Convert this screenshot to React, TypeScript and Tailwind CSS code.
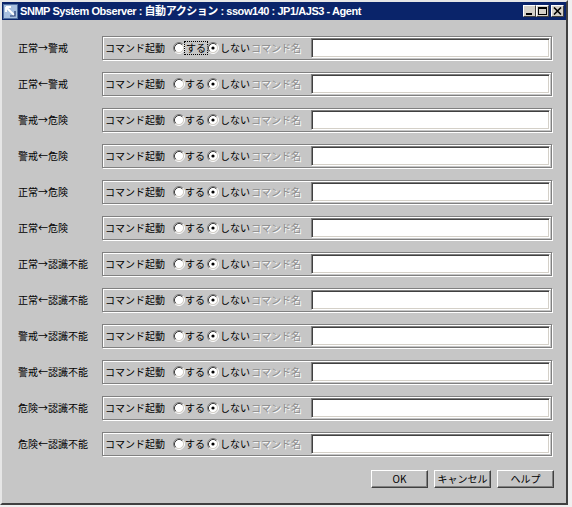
import React from 'react';

const rows = [
  '正常→警戒',
  '正常←警戒',
  '警戒→危険',
  '警戒←危険',
  '正常→危険',
  '正常←危険',
  '正常→認識不能',
  '正常←認識不能',
  '警戒→認識不能',
  '警戒←認識不能',
  '危険→認識不能',
  '危険←認識不能',
];

const font = "font-['Noto_Sans_CJK_JP','Liberation_Sans',sans-serif]";

function Radio({ checked }: { checked: boolean }) {
  return (
    <svg width="12" height="12" viewBox="0 0 12 12" className="shrink-0">
      <circle cx="6" cy="6" r="4.5" fill="#ffffff" />
      <path d="M2.11 9.89 A5.5 5.5 0 0 1 9.89 2.11" stroke="#808080" fill="none" />
      <path d="M9.89 2.11 A5.5 5.5 0 0 1 2.11 9.89" stroke="#ffffff" fill="none" />
      <path d="M2.82 9.18 A4.5 4.5 0 0 1 9.18 2.82" stroke="#404040" fill="none" />
      <path d="M9.18 2.82 A4.5 4.5 0 0 1 2.82 9.18" stroke="#d4d0c8" fill="none" />
      {checked && <circle cx="6" cy="6" r="1.6" fill="#000000" />}
    </svg>
  );
}

function ActionRow({ label, focused }: { label: string; focused: boolean }) {
  return (
    <div className="flex items-center h-[24px] whitespace-nowrap">
      <div className="w-[84px] text-[10px] text-black leading-none">{label}</div>
      <div className="flex items-center h-[24px] w-[450px] border border-[#808080] shadow-[inset_1px_1px_0_#ffffff,1px_1px_0_#ffffff] pl-[2px] pr-[1px] text-[10px] leading-none">
        <span className="w-[68px] shrink-0 text-black">コマンド起動</span>
        <Radio checked={false} />
        <span className="w-[22px] shrink-0 flex items-center">
          <span
            className={
              focused
                ? 'ml-[-1px] px-[1px] py-[1px] border border-dotted border-black text-black'
                : 'px-[0px] py-[2px] text-black'
            }
          >
            する
          </span>
        </span>
        <Radio checked={true} />
        <span className="w-[32px] shrink-0 pl-[1px] text-black">しない</span>
        <span className="w-[60px] shrink-0 text-[#8c8c8c] [text-shadow:1px_1px_0_#ffffff]">コマンド名</span>
        <div className="flex-1 h-[20px] bg-white border-t border-l border-[#808080] border-b border-r border-b-[#ffffff] border-r-[#ffffff] shadow-[inset_1px_1px_0_#404040,inset_-1px_-1px_0_#d4d0c8]" />
      </div>
    </div>
  );
}

function Button({ children }: { children: React.ReactNode }) {
  return (
    <div className="w-[57px] h-[18px] flex items-center justify-center border border-t-white border-l-white border-b-[#404040] border-r-[#404040] shadow-[inset_-1px_-1px_0_#808080] text-[10px] leading-none text-black">
      {children}
    </div>
  );
}

function CaptionButton({ kind }: { kind: 'min' | 'max' | 'close' }) {
  return (
    <div className="w-[13px] h-[12px] bg-[#d4d0c8] border border-t-white border-l-white border-b-[#404040] border-r-[#404040] flex items-center justify-center">
      <svg width="9" height="8" viewBox="0 0 9 8">
        {kind === 'min' && <rect x="1" y="6" width="6" height="2" fill="#000" />}
        {kind === 'max' && (
          <>
            <rect x="0.5" y="0.5" width="8" height="7" fill="none" stroke="#000" />
            <rect x="0" y="0" width="9" height="2" fill="#000" />
          </>
        )}
        {kind === 'close' && (
          <path d="M1 0.5 L8 7.5 M8 0.5 L1 7.5" stroke="#000" strokeWidth="1.6" />
        )}
      </svg>
    </div>
  );
}

export default function App() {
  return (
    <div className={`w-[572px] h-[507px] bg-[#f0f0f0] ${font}`}>
      <div className="w-[568px] h-[505px] bg-[#c6c6c6] border-2 border-t-[#e6e6e6] border-l-[#e6e6e6] border-b-[#404040] border-r-[#404040] flex flex-col">
        <div className="h-[18px] bg-[#0a246a] flex items-center pl-[1px] pr-[2px]">
          <svg width="15" height="15" viewBox="0 0 15 15" className="shrink-0">
            <rect x="0" y="0" width="15" height="15" fill="#a8c0e0" />
            <rect x="0.5" y="0.5" width="14" height="14" fill="none" stroke="#5070a0" />
            <path d="M3 3 L12 12 M3 3 L3 8 M3 3 L8 3" stroke="#ffffff" strokeWidth="1.8" fill="none" />
            <path d="M7 12 L12 12 L12 7" stroke="#203870" strokeWidth="1.2" fill="none" />
          </svg>
          <span className="ml-[2px] text-white font-bold text-[11px] tracking-[-0.45px] leading-none whitespace-nowrap font-['Liberation_Sans','Noto_Sans_CJK_JP',sans-serif]">
            SNMP System Observer : 自動アクション : ssow140 : JP1/AJS3 - Agent
          </span>
          <div className="ml-auto flex items-center">
            <CaptionButton kind="min" />
            <CaptionButton kind="max" />
            <div className="w-[2px]" />
            <CaptionButton kind="close" />
          </div>
        </div>
        <div className="flex flex-col pl-[16px] pt-[16px] gap-[12px]">
          {rows.map((r, i) => (
            <ActionRow key={r} label={r} focused={i === 0} />
          ))}
        </div>
        <div className="flex justify-end gap-[6px] pr-[12px] mt-[14px]">
          <Button>OK</Button>
          <Button>キャンセル</Button>
          <Button>ヘルプ</Button>
        </div>
      </div>
    </div>
  );
}
